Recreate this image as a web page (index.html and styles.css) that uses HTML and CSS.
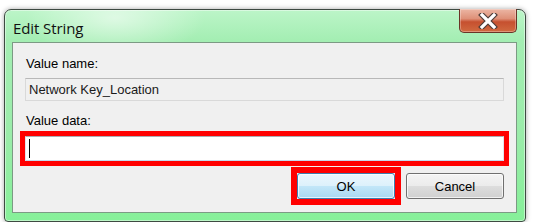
FILE: index.html
```html
<!DOCTYPE html>
<html lang="en">
<head>
  <meta charset="UTF-8" />
  <title>Edit String</title>
  <link rel="stylesheet" href="styles.css">
</head>
<body>
  <div class="window">
    <div class="titlebar">
      <span class="title">Edit String</span>
      <button class="close">
        <svg width="22" height="16" viewBox="0 0 22 16">
          <path d="M5 2 L17 14 M17 2 L5 14" stroke="#4e3c38" stroke-width="5.5" stroke-linecap="square"/>
          <path d="M5 2 L17 14 M17 2 L5 14" stroke="#ffffff" stroke-width="3.2" stroke-linecap="square"/>
        </svg>
      </button>
    </div>

    <div class="client">
      <div class="label">Value name:</div>
      <div class="field readonly">Network Key_Location</div>

      <div class="label second">Value data:</div>
      <div class="field input highlight"><span class="caret"></span></div>

      <div class="buttons">
        <span class="mark"><button class="btn default">OK</button></span>
        <button class="btn">Cancel</button>
      </div>
    </div>
  </div>
</body>
</html>
```

FILE: styles.css
```css
body {
  margin: 0;
  background: #ffffff;
  font-family: "Liberation Sans", Arial, sans-serif;
  font-size: 13px;
  color: #000;
}
.window {
  box-sizing: border-box;
  width: 522px;
  height: 213px;
  margin: 9px 0 0 4px;
  border: 1px solid #3e4a42;
  border-radius: 7px 7px 4px 4px;
  background:
    radial-gradient(ellipse 90px 40px at 110px 8px, rgba(255,255,255,0.55), rgba(255,255,255,0) 100%),
    linear-gradient(to bottom, #bcf5c8 0, #a4eeb3 30px, #9aeca9 60%, #86f099 100%);
  box-shadow: 0 0 5px rgba(0,0,0,0.35), inset 0 0 0 1px rgba(255,255,255,0.45);
  display: flex;
  flex-direction: column;
}
.titlebar {
  height: 32px;
  display: flex;
  align-items: flex-start;
  justify-content: space-between;
}
.title {
  font-family: "Open Sans", "Noto Sans", sans-serif;
  font-size: 15px;
  letter-spacing: -0.1px;
  color: #111;
  margin: 8px 0 0 8px;
}
.close {
  width: 58px;
  height: 24px;
  margin: -1px 8px 0 0;
  padding: 0;
  border: 1px solid #6a3426;
  border-top: none;
  border-radius: 0 0 5px 5px;
  background: linear-gradient(to bottom, #ecb6a4 0, #de9078 42%, #c6502f 56%, #d06a40 100%);
  box-shadow: inset 0 0 0 1px rgba(255,255,255,0.3);
  display: flex;
  align-items: center;
  justify-content: center;
}
.client {
  flex: 1;
  margin: 0 8px 8px 7px;
  border: 1px solid #7c9a84;
  background: #f0f0f0;
  padding: 13px 12px 0 12px;
}
.label {
  line-height: 16px;
  padding-left: 1px;
}
.label.second {
  margin-top: 12px;
}
.field {
  box-sizing: border-box;
  height: 23px;
  margin-top: 6px;
  border: 1px solid #d9d9d9;
  border-top-color: #b8b8b8;
  background: #f0f0f0;
  padding-left: 3px;
  line-height: 21px;
  color: #1a1a1a;
}
.field.input {
  height: 25px;
  margin-top: 7px;
  background: #fff;
  border-color: #e2e3ea;
  border-top-color: #abadb3;
  border-bottom-color: #c7d8ec;
  display: flex;
  align-items: center;
}
.caret {
  width: 1px;
  height: 19px;
  background: #000;
}
.highlight {
  outline: 5px solid #ff0000;
}
.buttons {
  display: flex;
  justify-content: flex-end;
  align-items: center;
  gap: 5px;
  margin-top: 12px;
}
.mark {
  display: flex;
  border: 6px solid #ff0000;
  margin: -6px 0;
}
.btn {
  box-sizing: border-box;
  width: 98px;
  height: 26px;
  font-family: "Liberation Sans", Arial, sans-serif;
  font-size: 13px;
  color: #000;
  border: 1px solid #707070;
  border-radius: 3px;
  background: linear-gradient(to bottom, #f4f4f4 0, #ececec 48%, #dddddd 52%, #d0d0d0 100%);
  box-shadow: inset 0 0 0 1px rgba(255,255,255,0.7);
  padding: 0;
}
.btn.default {
  border-color: #3c7fb1;
  background: linear-gradient(to bottom, #ecf7fd 0, #ddf1fb 48%, #c2e6f8 52%, #a9d9f2 100%);
}
```
